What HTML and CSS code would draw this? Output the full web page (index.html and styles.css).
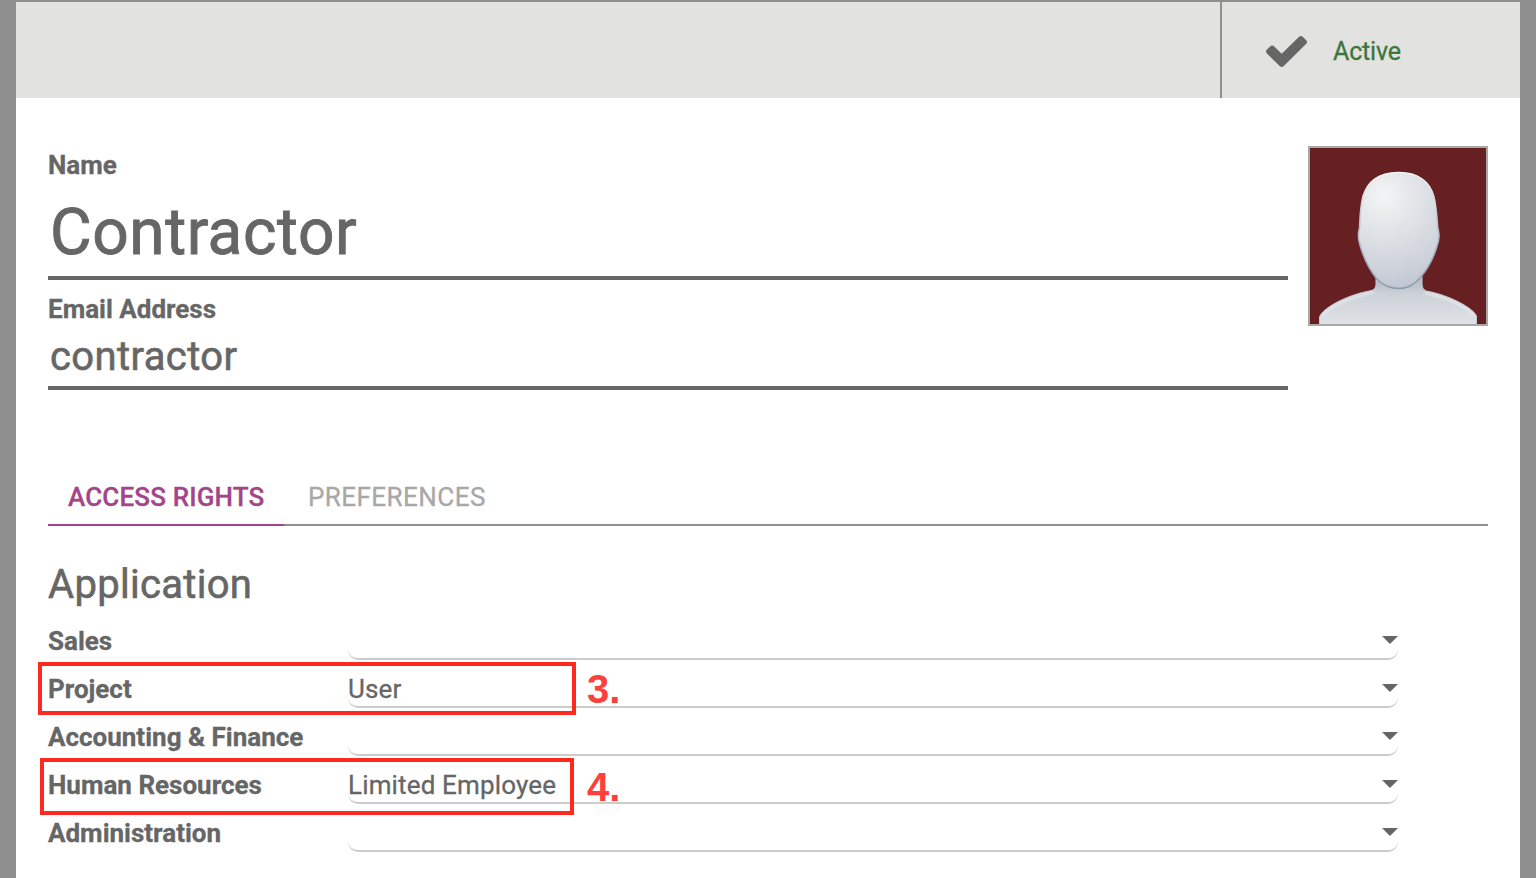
FILE: index.html
```
<!DOCTYPE html>
<html lang="en">
<head>
<meta charset="utf-8">
<title>Contractor</title>
<link rel="stylesheet" href="styles.css">
</head>
<body>
<main class="sheet">
  <header class="button-box">
    <button class="stat">
      <svg class="stat-icon" viewBox="121 334 1550 1188" preserveAspectRatio="none"><path d="M1671 566q0 40-28 68l-724 724-136 136q-28 28-68 28t-68-28l-136-136-362-362q-28-28-28-68t28-68l136-136q28-28 68-28t68 28l294 295 656-657q28-28 68-28t68 28l136 136q28 28 28 68z"/></svg>
      <span class="stat-text">Active</span>
    </button>
  </header>
  <div class="content">
    <section class="identity">
      <div class="title">
        <div class="label">Name</div>
        <div class="input input-name">Contractor</div>
        <div class="label">Email Address</div>
        <div class="input input-email">contractor</div>
      </div>
      <svg class="avatar" viewBox="0 0 176 176">
        <defs>
          <radialGradient id="face" gradientUnits="userSpaceOnUse" cx="74" cy="48" r="96">
            <stop offset="0" stop-color="#f3f4f5"/><stop offset=".45" stop-color="#dde0e4"/><stop offset=".85" stop-color="#c9ced8"/><stop offset="1" stop-color="#bcc4d1"/>
          </radialGradient>
          <linearGradient id="body" x1="0" y1="0" x2="0" y2="1">
            <stop offset="0" stop-color="#adb5c2"/><stop offset=".35" stop-color="#ccd1d8"/><stop offset="1" stop-color="#e0e4e7"/>
          </linearGradient>
          <linearGradient id="rim" x1="0" y1="0" x2="0" y2="1">
            <stop offset="0" stop-color="#f3f4f6"/><stop offset=".45" stop-color="#b9c1cd"/><stop offset="1" stop-color="#8f9aad"/>
          </linearGradient>
          <filter id="soft"><feGaussianBlur stdDeviation=".8"/></filter>
        </defs>
        <rect width="176" height="176" fill="#662021"/>
        <path d="M9.500 178V169C13 160 36 147 62 142.500Q66 141 66 137V128H112V137Q112 141 116 143C139 147 163 160 166.500 168V178Z" fill="url(#body)" stroke="#c4cad3" stroke-width="1"/>
        <path d="M12 168C18 160 40 149 64 144M115 145C137 149 158 160 164 167" fill="none" stroke="#e8ebee" stroke-width="2" filter="url(#soft)"/>
        <path d="M88 24.500C107 24 120 33 124 49C127 62 127 74 128 81C130 87 129.500 91 127 98C123 112 117 122 110 130C104 137 97 140.500 89 140.500C79 140.500 72 137 66 130C59 121 53 108 50 97C48 91 48 85 49.500 80C50 70 50 60 53 48C58 33 68 25 88 24.500Z" fill="url(#face)" stroke="url(#rim)" stroke-width="1.500"/>
      </svg>
    </section>
    <nav class="tabs">
      <a class="tab tab-active">ACCESS RIGHTS</a>
      <a class="tab">PREFERENCES</a>
    </nav>
    <h2 class="group-title">Application</h2>
    <section class="rights">
      <div class="row"><span class="label row-label">Sales</span><div class="select"><span></span><i class="caret"></i></div></div>
      <div class="row"><span class="label row-label">Project</span><div class="select"><span>User</span><i class="caret"></i></div></div>
      <div class="row"><span class="label row-label">Accounting &amp; Finance</span><div class="select"><span></span><i class="caret"></i></div></div>
      <div class="row"><span class="label row-label">Human Resources</span><div class="select"><span>Limited Employee</span><i class="caret"></i></div></div>
      <div class="row"><span class="label row-label">Administration</span><div class="select"><span></span><i class="caret"></i></div></div>
      <div class="mark mark-project"></div>
      <div class="step step-project">3.</div>
      <div class="mark mark-hr"></div>
      <div class="step step-hr">4.</div>
    </section>
  </div>
</main>
</body>
</html>
```
FILE: styles.css
```
* { box-sizing: border-box; }
body {
  margin: 0;
  height: 878px;
  overflow: hidden;
  padding: 2px 16px 0;
  background: #8f8f8f;
  color: #666;
  font: 26px/36px Roboto, "Liberation Sans", sans-serif;
  -webkit-text-stroke: .3px;
}
.sheet { height: 876px; background: #fff; }
.button-box {
  display: flex;
  justify-content: flex-end;
  height: 96px;
  background: #e2e2e0;
}
.stat {
  display: flex;
  align-items: center;
  width: 300px;
  padding: 3px 0 0 44px;
  border: 0;
  border-left: 2px solid #8f8f8f;
  background: none;
  font: inherit;
}
.stat-icon { width: 41px; height: 31px; fill: #666; }
.stat-text {
  margin-left: 26px;
  color: #3c763d;
  font-size: 25px;
  letter-spacing: -.15px;
}
.content { padding: 49px 32px 0; }
.identity { display: flex; justify-content: space-between; height: 334px; }
.title { width: 1240px; }
.label { font-weight: 700; }
.input {
  padding-left: 2px;
  border-bottom: 4px solid #666;
  -webkit-text-stroke: .6px;
}
.input-name {
  height: 84px;
  margin-top: 13px;
  margin-bottom: 11px;
  font-size: 64px;
  line-height: 74px;
  letter-spacing: .55px;
  -webkit-text-stroke: .9px;
}
.input-email {
  height: 58px;
  margin-top: 5px;
  font-size: 40px;
  line-height: 50px;
  letter-spacing: .4px;
}
.avatar {
  width: 180px;
  height: 180px;
  margin-top: -1px;
  border: 2px solid #a8a8a8;
}
.tabs {
  display: flex;
  gap: 4px;
  height: 45px;
  border-bottom: 2px solid #8f8f8f;
}
.tab {
  height: 47px;
  margin-top: -2px;
  padding: 0 20px;
  color: #a8a8a8;
  letter-spacing: .45px;
  white-space: nowrap;
}
.tab-active {
  width: 236px;
  border-bottom: 2px solid #a24689;
  color: #a24689;
  font-weight: 500;
  letter-spacing: .15px;
}
.group-title {
  height: 48px;
  margin: 34px 0 9px;
  font-size: 40px;
  line-height: 50px;
  font-weight: 400;
  letter-spacing: .3px;
  -webkit-text-stroke: .6px;
}
.rights { position: relative; }
.row { display: flex; height: 48px; line-height: 48px; }
.row-label { width: 300px; }
.select {
  display: flex;
  justify-content: space-between;
  width: 1050px;
  height: 43px;
  border-bottom: 2px solid #ccc;
  border-radius: 0 0 10px 10px;
  letter-spacing: .15px;
}
.caret {
  width: 16px;
  height: 8px;
  margin-top: 19px;
  background: #666;
  clip-path: polygon(0 0, 100% 0, 50% 100%);
}
.mark { position: absolute; border: 4px solid #ff2a1f; }
.mark-project { left: -10px; top: 45px; width: 538px; height: 53px; }
.mark-hr { left: -8px; top: 141px; width: 534px; height: 57px; }
.step {
  position: absolute;
  left: 539px;
  color: #ff3f3a;
  font: 700 40px/40px "Liberation Sans", sans-serif;
  -webkit-text-stroke: 0;
}
.step-project { top: 52px; }
.step-hr { top: 150px; }
```
